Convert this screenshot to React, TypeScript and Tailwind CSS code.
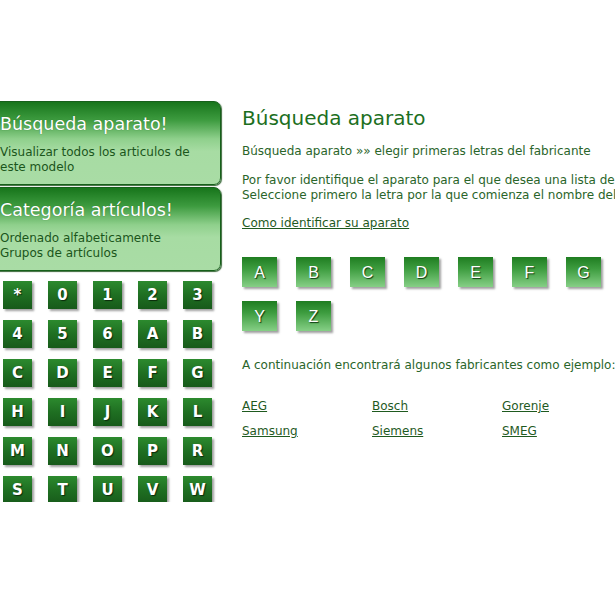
import React from "react";

const gridKeys = ["*","0","1","2","3","4","5","6","A","B","C","D","E","F","G","H","I","J","K","L","M","N","O","P","R","S","T","U","V","W"];
const letterKeys = ["A","B","C","D","E","F","G","Y","Z"];

function Panel({ title, lines }: { title: string; lines: string[] }) {
  return (
    <div className="h-[84px] rounded-[7px] border border-[#16601a] bg-[linear-gradient(to_bottom,#17751b_0%,#3d9b3f_22%,#8fd08c_45%,#a7dca3_60%,#a9dca5_100%)] pl-[10px] pt-[11px] shadow-[1px_1px_1px_#3a6a3a]">
      <div className="text-[17.5px] leading-[22px] text-white [text-shadow:0_0_1px_rgba(0,60,0,0.5)]">{title}</div>
      <div className="mt-[10px] text-[12px] leading-[14.5px] text-[#1b561b]">
        {lines.map((l) => (
          <div key={l}>{l}</div>
        ))}
      </div>
    </div>
  );
}

export default function App() {
  return (
    <div
      className="relative flex h-[615px] w-[615px] overflow-hidden bg-white pt-[101px]"
      style={{ fontFamily: '"DejaVu Sans", Verdana, sans-serif' }}
    >
      <div className="ml-[-11px] w-[232px] shrink-0">
        <Panel title="Búsqueda aparato!" lines={["Visualizar todos los articulos de", "este modelo"]} />
        <div className="mt-[2px]">
          <Panel title="Categoría artículos!" lines={["Ordenado alfabeticamente", "Grupos de artículos"]} />
        </div>
        <div className="ml-[14px] mt-[10px] h-[221px] overflow-hidden">
          <div className="grid w-[209px] grid-cols-[repeat(5,29px)] gap-x-[16px] gap-y-[11px]">
            {gridKeys.map((k) => (
              <div
                key={k}
                className="flex h-[28px] w-[29px] items-center justify-center bg-[linear-gradient(to_bottom,#2c8a2e_0%,#1f6f22_50%,#175a1a_100%)] text-[15px] font-bold text-white shadow-[2px_2px_2px_rgba(80,80,80,0.55)] [text-shadow:1px_1px_1px_#0b2a0b]"
              >
                {k}
              </div>
            ))}
          </div>
        </div>
      </div>
      <div className="ml-[21px] w-[500px] shrink-0 text-[12px] leading-[15px] text-[#2a652a]">
        <div className="mt-[5px] whitespace-nowrap text-[20px] leading-[24px] text-[#1c6f1e]">Búsqueda aparato</div>
        <div className="mt-[14px] whitespace-nowrap">Búsqueda aparato »» elegir primeras letras del fabricante</div>
        <div className="mt-[14px] whitespace-nowrap">
          <div>Por favor identifique el aparato para el que desea una lista de artículos.</div>
          <div>Seleccione primero la letra por la que comienza el nombre del fabricante.</div>
        </div>
        <div className="mt-[13px] whitespace-nowrap">
          <a className="text-[#1f5a1f] underline">Como identificar su aparato</a>
        </div>
        <div className="mt-[26px] grid w-[400px] grid-cols-[repeat(7,35px)] gap-x-[19px] gap-y-[14px]">
          {letterKeys.map((k) => (
            <div
              key={k}
              className="flex h-[30px] w-[35px] items-center justify-center bg-[linear-gradient(to_bottom,#1f7d21_0%,#3e9d40_40%,#86cf86_100%)] text-[16px] text-white shadow-[2px_2px_2px_rgba(80,80,80,0.55)] [text-shadow:1px_1px_1px_#0e3a0e]"
              style={{ fontFamily: '"Liberation Sans", Arial, sans-serif' }}
            >
              {k}
            </div>
          ))}
        </div>
        <div className="mt-[27px] whitespace-nowrap">A continuación encontrará algunos fabricantes como ejemplo:</div>
        <div className="mt-[26px] grid w-[390px] grid-cols-[130px_130px_130px] gap-y-[10px]">
          {["AEG", "Bosch", "Gorenje", "Samsung", "Siemens", "SMEG"].map((m) => (
            <div key={m}>
              <a className="text-[#1f5a1f] underline">{m}</a>
            </div>
          ))}
        </div>
      </div>
    </div>
  );
}
